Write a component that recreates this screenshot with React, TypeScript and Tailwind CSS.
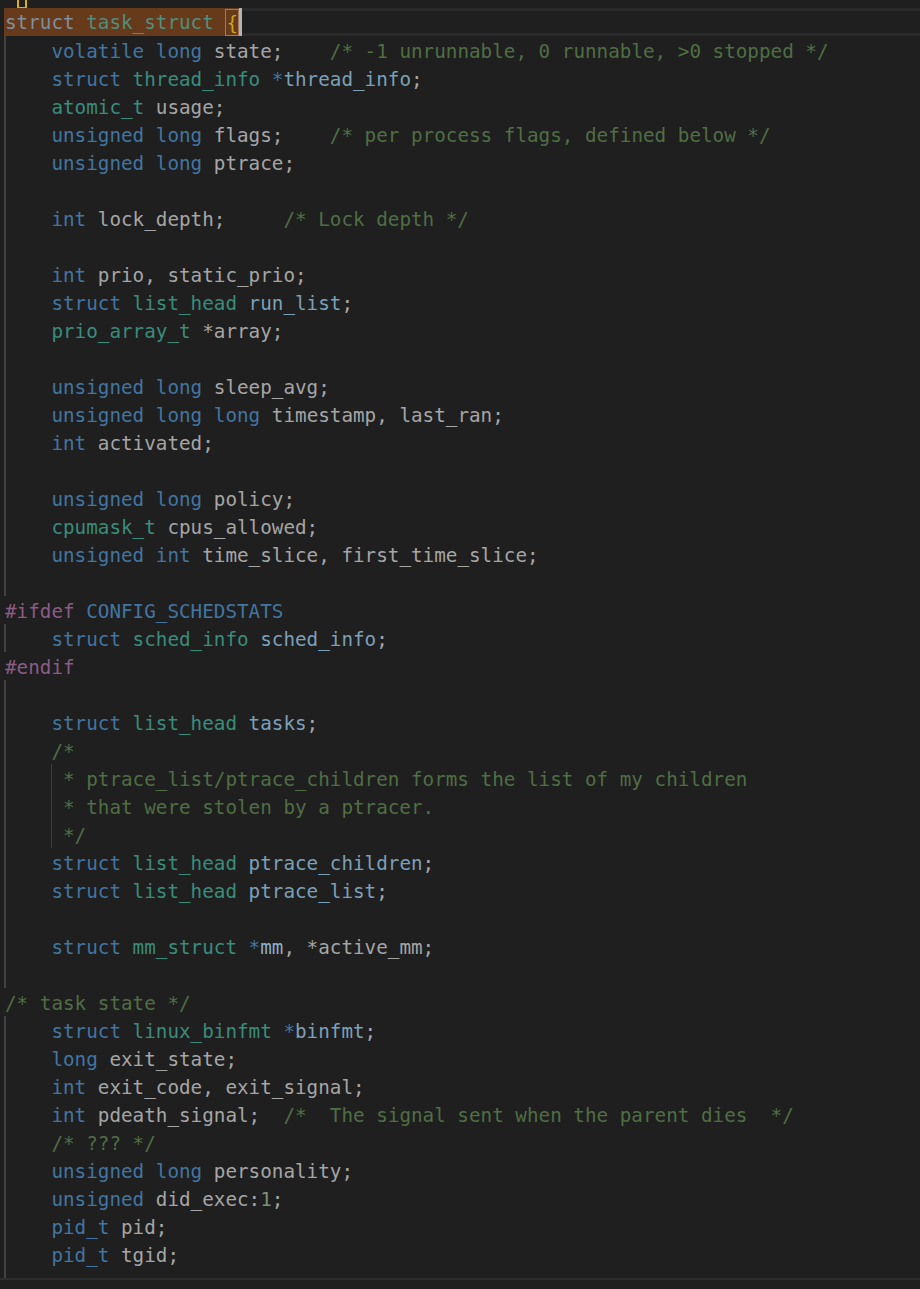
import React from 'react';

type Tok = [string, keyof typeof C];

const C = {
  k: 'text-[#4275a1]',
  t: 'text-[#3a8c7b]',
  v: 'text-[#7ba0b8]',
  w: 'text-[#8cafc6]',
  p: 'text-[#a5a5a5]',
  c: 'text-[#4f6e44]',
  m: 'text-[#8a5c86]',
  n: 'text-[#7e9273]',
};

// guide: 0 = none, 1 = outer guide, 2 = outer + comment guide
type Line = { toks: Tok[]; guide: 0 | 1 | 2 };

const I: Tok = ['    ', 'p'];
const L = (guide: 0 | 1 | 2, ...toks: Tok[]): Line => ({ toks, guide });
const B = L(1);

const lines: Line[] = [
  L(1, I, ['volatile', 'k'], [' ', 'p'], ['long', 'k'], [' state;    ', 'p'], ['/* -1 unrunnable, 0 runnable, >0 stopped */', 'c']),
  L(1, I, ['struct', 'k'], [' ', 'p'], ['thread_info', 't'], [' ', 'p'], ['*', 'k'], ['thread_info', 'v'], [';', 'p']),
  L(1, I, ['atomic_t', 't'], [' usage;', 'p']),
  L(1, I, ['unsigned', 'k'], [' ', 'p'], ['long', 'k'], [' flags;    ', 'p'], ['/* per process flags, defined below */', 'c']),
  L(1, I, ['unsigned', 'k'], [' ', 'p'], ['long', 'k'], [' ptrace;', 'p']),
  B,
  L(1, I, ['int', 'k'], [' lock_depth;     ', 'p'], ['/* Lock depth */', 'c']),
  B,
  L(1, I, ['int', 'k'], [' prio, static_prio;', 'p']),
  L(1, I, ['struct', 'k'], [' ', 'p'], ['list_head', 't'], [' ', 'p'], ['run_list', 'v'], [';', 'p']),
  L(1, I, ['prio_array_t', 't'], [' *array;', 'p']),
  B,
  L(1, I, ['unsigned', 'k'], [' ', 'p'], ['long', 'k'], [' sleep_avg;', 'p']),
  L(1, I, ['unsigned', 'k'], [' ', 'p'], ['long', 'k'], [' ', 'p'], ['long', 'k'], [' timestamp, last_ran;', 'p']),
  L(1, I, ['int', 'k'], [' activated;', 'p']),
  B,
  L(1, I, ['unsigned', 'k'], [' ', 'p'], ['long', 'k'], [' policy;', 'p']),
  L(1, I, ['cpumask_t', 't'], [' cpus_allowed;', 'p']),
  L(1, I, ['unsigned', 'k'], [' ', 'p'], ['int', 'k'], [' time_slice, first_time_slice;', 'p']),
  B,
  L(0, ['#ifdef', 'm'], [' ', 'p'], ['CONFIG_SCHEDSTATS', 'k']),
  L(1, I, ['struct', 'k'], [' ', 'p'], ['sched_info', 't'], [' ', 'p'], ['sched_info', 'v'], [';', 'p']),
  L(0, ['#endif', 'm']),
  B,
  L(1, I, ['struct', 'k'], [' ', 'p'], ['list_head', 't'], [' ', 'p'], ['tasks', 'v'], [';', 'p']),
  L(1, I, ['/*', 'c']),
  L(2, I, [' * ptrace_list/ptrace_children forms the list of my children', 'c']),
  L(2, I, [' * that were stolen by a ptracer.', 'c']),
  L(2, I, [' */', 'c']),
  L(1, I, ['struct', 'k'], [' ', 'p'], ['list_head', 't'], [' ', 'p'], ['ptrace_children', 'v'], [';', 'p']),
  L(1, I, ['struct', 'k'], [' ', 'p'], ['list_head', 't'], [' ', 'p'], ['ptrace_list', 'v'], [';', 'p']),
  B,
  L(1, I, ['struct', 'k'], [' ', 'p'], ['mm_struct', 't'], [' ', 'p'], ['*', 'k'], ['mm', 'w'], [', *active_mm;', 'p']),
  B,
  L(0, ['/* task state */', 'c']),
  L(1, I, ['struct', 'k'], [' ', 'p'], ['linux_binfmt', 't'], [' ', 'p'], ['*', 'k'], ['binfmt', 'v'], [';', 'p']),
  L(1, I, ['long', 'k'], [' exit_state;', 'p']),
  L(1, I, ['int', 'k'], [' exit_code, exit_signal;', 'p']),
  L(1, I, ['int', 'k'], [' pdeath_signal;  ', 'p'], ['/*  The signal sent when the parent dies  */', 'c']),
  L(1, I, ['/* ??? */', 'c']),
  L(1, I, ['unsigned', 'k'], [' ', 'p'], ['long', 'k'], [' personality;', 'p']),
  L(1, I, ['unsigned', 'k'], [' did_exec:', 'p'], ['1', 'n'], [';', 'p']),
  L(1, I, ['pid_t', 'k'], [' pid;', 'p']),
  L(1, I, ['pid_t', 'k'], [' tgid;', 'p']),
];

function CodeLine({ line }: { line: Line }) {
  return (
    <div className="relative h-[28px] pl-[5px] pt-[2px]">
      {line.guide > 0 && <span className="absolute left-[4px] top-0 h-[28px] w-[2px] bg-[#424242]" />}
      {line.guide === 2 && <span className="absolute left-[51px] top-0 h-[28px] w-[1px] bg-[#3e3e3e]" />}
      {line.toks.map(([text, cls], i) => (
        <span key={i} className={C[cls]}>
          {text}
        </span>
      ))}
    </div>
  );
}

export default function App() {
  return (
    <div
      className="min-h-screen w-full overflow-hidden bg-[#1f1f1f] text-[19.27px] leading-[28px] whitespace-pre"
      style={{ fontFamily: '"DejaVu Sans Mono", "Liberation Mono", monospace' }}
    >
      {/* bracket marker cut off at the top */}
      <div className="flex h-[8px]">
        <span className="ml-[17px] h-[9px] w-[10px] border-2 border-t-0 border-[#d9b300] bg-[#1f1f1f]" />
      </div>

      {/* current line */}
      <div className="flex h-[28px]">
        <div className="ml-[4px] flex h-full items-center bg-[#673a1c] pl-[1px] pt-[2px]">
          <span className="text-[#7d8fa0]">struct</span>
          <span> </span>
          <span className="text-[#4f8f7e]">task_struct</span>
          <span> </span>
          <span className="-mt-[2px] h-[27px] border border-[#a57a5c] pt-[1px] leading-[25px] text-[#cca51c]">{'{'}</span>
        </div>
        <div className="h-full w-[3px] bg-[#b4b4b4]" />
        <div className="h-full flex-1 border-y-[3px] border-[#2a2a2a]" />
      </div>

      {lines.map((line, i) => (
        <CodeLine key={i} line={line} />
      ))}

      <div className="relative h-[10px]">
        <span className="absolute left-[4px] top-0 h-full w-[2px] bg-[#424242]" />
      </div>
      <div className="h-[2px] bg-[#2d2d2d]" />
    </div>
  );
}
